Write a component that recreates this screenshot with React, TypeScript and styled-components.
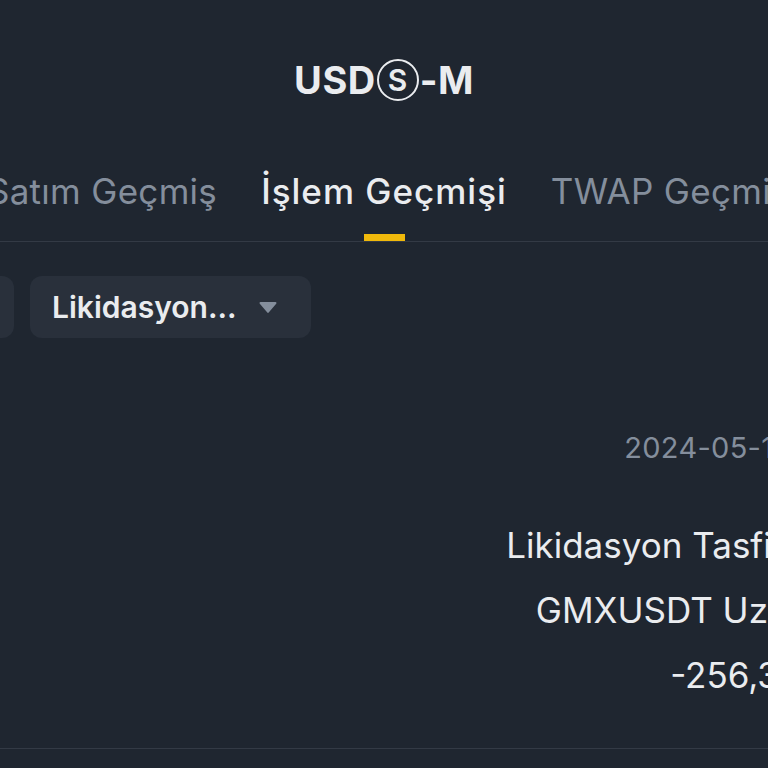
import styled, { createGlobalStyle } from 'styled-components';

const GlobalStyle = createGlobalStyle`
  html, body {
    margin: 0;
    padding: 0;
    background: #1f2630;
  }
  body {
    font-family: Inter, 'Noto Sans', sans-serif;
    -webkit-font-smoothing: antialiased;
  }
`;

const Page = styled.div`
  width: 768px;
  height: 768px;
  overflow: hidden;
  background: #1f2630;
  color: #eaecef;
`;

const Header = styled.header`
  display: flex;
  justify-content: center;
  padding-top: 56px;
`;

const Title = styled.h1`
  display: flex;
  align-items: center;
  margin: 0;
  font-size: 38px;
  line-height: 48px;
  font-weight: 700;
  letter-spacing: 0.5px;
`;

const CircledS = styled.span`
  display: inline-flex;
  align-items: center;
  justify-content: center;
  width: 38px;
  height: 38px;
  margin: 0 1px;
  border: 2.5px solid #eaecef;
  border-radius: 50%;
  font-size: 30px;
  font-weight: 600;
  line-height: 1;
`;

const TabStrip = styled.nav`
  display: grid;
  grid-template-columns: 1fr auto 1fr;
  column-gap: 44px;
  padding-top: 67px;
  border-bottom: 1px solid #333a45;
`;

const Tab = styled.div<{ $active?: boolean; $side?: 'left' | 'right' }>`
  display: flex;
  flex-direction: column;
  align-items: ${(p) =>
    p.$side === 'left' ? 'flex-end' : p.$side === 'right' ? 'flex-start' : 'center'};
  min-width: 0;
  white-space: nowrap;
  font-size: 35px;
  line-height: 40px;
  letter-spacing: ${(p) => (p.$active ? '1px' : '0.3px')};
  font-weight: ${(p) => (p.$active ? 500 : 400)};
  color: ${(p) => (p.$active ? '#eaecef' : '#848e9c')};
`;

const Underline = styled.span<{ $active?: boolean }>`
  width: 41px;
  height: 7px;
  margin-top: 23px;
  background: ${(p) => (p.$active ? '#f0b90b' : 'transparent')};
`;

const FilterRow = styled.div`
  display: grid;
  grid-template-columns: 14px auto;
  justify-content: start;
  column-gap: 16px;
  padding-top: 34px;
`;

const Chip = styled.button`
  display: flex;
  align-items: center;
  gap: 22px;
  justify-self: end;
  height: 62px;
  padding: 0 34px 0 22px;
  border: none;
  border-radius: 12px;
  background: #29303b;
  color: #eaecef;
  font-family: inherit;
  font-size: 30px;
  font-weight: 600;
  white-space: nowrap;
`;

const Record = styled.section`
  display: flex;
  flex-direction: column;
  align-items: flex-end;
  margin-right: -152px;
  padding: 90px 0 51px;
  border-bottom: 1px solid #333a45;
  white-space: nowrap;
`;

const DateText = styled.div`
  font-size: 29px;
  line-height: 40px;
  letter-spacing: 0.3px;
  color: #848e9c;
  margin-bottom: 55px;
`;

const Line = styled.div`
  font-size: 35px;
  line-height: 44px;
  color: #eaecef;
  & + & {
    margin-top: 21px;
  }
`;

function Caret() {
  return (
    <svg width="18" height="13" viewBox="0 0 18 13">
      <path d="M1.5 1h15c.9 0 1.3 1 .7 1.7L9.7 11.6c-.4.5-1 .5-1.4 0L.8 2.7C.2 2 .6 1 1.5 1z" fill="#848e9c" />
    </svg>
  );
}

export default function App() {
  return (
    <Page>
      <GlobalStyle />
      <Header>
        <Title>
          USD<CircledS>S</CircledS>-M
        </Title>
      </Header>

      <TabStrip>
        <Tab $side="left">
          Alım Satım Geçmiş
          <Underline />
        </Tab>
        <Tab $active>
          İşlem Geçmişi
          <Underline $active />
        </Tab>
        <Tab $side="right">
          TWAP Geçmişi
          <Underline />
        </Tab>
      </TabStrip>

      <FilterRow>
        <Chip>Son 7 Gün</Chip>
        <Chip>
          Likidasyon...
          <Caret />
        </Chip>
      </FilterRow>

      <Record>
        <DateText>2024-05-14 09:31:27</DateText>
        <Line>Likidasyon Tasfiye Ücreti</Line>
        <Line>GMXUSDT Uzun Vadeli</Line>
        <Line>-256,381 USDT</Line>
      </Record>
    </Page>
  );
}
